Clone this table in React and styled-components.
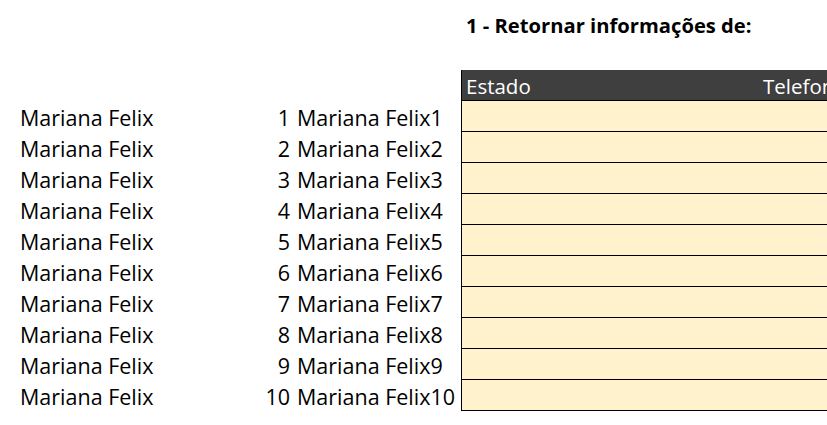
import React from "react";
import styled, { createGlobalStyle } from "styled-components";

const Global = createGlobalStyle`
  html, body { margin: 0; padding: 0; background: #ffffff; }
  body { font-family: "Open Sans", "Noto Sans", sans-serif; color: #000; overflow: hidden; }
`;

const Sheet = styled.div`
  width: 827px;
  height: 425px;
  overflow: hidden;
  padding-top: 8px;
  box-sizing: border-box;
  display: grid;
  grid-template-columns: 20px 160px 115px 166px 298px 140px;
  grid-auto-rows: 31px;
`;

const Cell = styled.div`
  display: flex;
  align-items: flex-end;
  justify-content: ${(p) => (p.$right ? "flex-end" : "flex-start")};
  padding: 0 ${(p) => (p.$right ? "5px" : "0")} 4px ${(p) => p.$pl || "0"};
  font-size: 21.5px;
  line-height: 1;
  white-space: nowrap;
  grid-column: ${(p) => p.$col || "auto"};
  box-sizing: border-box;
`;

const Title = styled(Cell)`
  font-weight: 700;
  font-size: 20.2px;
  grid-column: 5 / span 2;
  padding-left: 5px;
`;

const Head = styled(Cell)`
  background: #3f3f3f;
  color: #ffffff;
  font-size: 20.5px;
  padding-left: ${(p) => (p.$first ? "4px" : "4px")};
  border-left: ${(p) => (p.$first ? "1px solid #000" : "none")};
  border-bottom: 1px solid #000;
  overflow: hidden;
`;

const Fill = styled.div`
  background: #fff2cc;
  border-left: ${(p) => (p.$first ? "1px solid #000" : "none")};
  border-bottom: 1px solid #000;
  grid-column: ${(p) => p.$col};
`;

const rows = Array.from({ length: 10 }, (_, i) => i + 1);

export default function App() {
  return (
    <>
      <Global />
      <Sheet>
        <Title>1 - Retornar informações de:</Title>
        <Cell $col="1 / span 6" />
        <Cell $col="1 / span 4" />
        <Head $first>Estado</Head>
        <Head>Telefone</Head>
        {rows.map((n) => (
          <React.Fragment key={n}>
            <Cell $col="2">Mariana Felix</Cell>
            <Cell $col="3" $right>{n}</Cell>
            <Cell $col="4" $pl="2px">Mariana Felix{n}</Cell>
            <Fill $first $col="5" />
            <Fill $col="6" />
          </React.Fragment>
        ))}
      </Sheet>
    </>
  );
}
